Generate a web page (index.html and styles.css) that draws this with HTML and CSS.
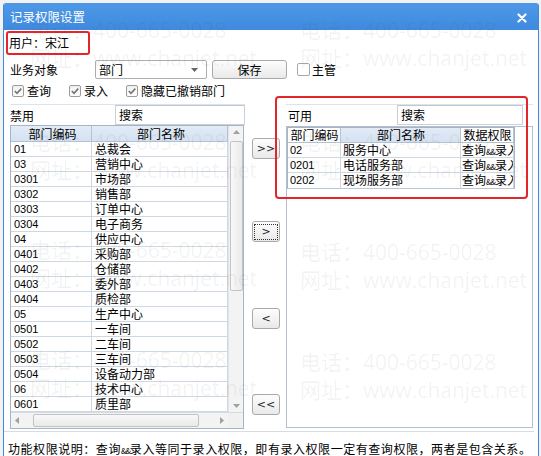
FILE: index.html
```html
<!DOCTYPE html>
<html>
<head>
<meta charset="utf-8">
<link rel="stylesheet" href="styles.css">
</head>
<body>
<div class="page">
  <div class="window">
    <div class="titlebar">
      <span class="title">记录权限设置</span>
      <svg class="close" width="10" height="10" viewBox="0 0 10 10"><path d="M1.5 1.5 L8.5 8.5 M8.5 1.5 L1.5 8.5" stroke="#fff" stroke-width="2.2" stroke-linecap="round"/></svg>
    </div>
    <div class="content">
      <div class="user-box">用户：宋江</div>
      <div class="obj-row">
        <span class="obj-label">业务对象</span>
        <div class="select"><span>部门</span><svg width="7" height="4" viewBox="0 0 7 4"><path d="M0 0 H7 L3.5 4 Z" fill="#666"/></svg></div>
        <div class="btn save">保存</div>
        <label class="chk unchecked"><span class="box"></span>主管</label>
      </div>
      <div class="chk-row">
        <label class="chk"><span class="box"><svg width="10" height="10" viewBox="0 0 10 10"><path d="M1.8 5 L4 7.3 L8.3 2.6" fill="none" stroke="#767676" stroke-width="1.6"/></svg></span>查询</label>
        <label class="chk c2"><span class="box"><svg width="10" height="10" viewBox="0 0 10 10"><path d="M1.8 5 L4 7.3 L8.3 2.6" fill="none" stroke="#767676" stroke-width="1.6"/></svg></span>录入</label>
        <label class="chk c3"><span class="box"><svg width="10" height="10" viewBox="0 0 10 10"><path d="M1.8 5 L4 7.3 L8.3 2.6" fill="none" stroke="#767676" stroke-width="1.6"/></svg></span>隐藏已撤销部门</label>
      </div>
      <div class="lists">
        <div class="left">
          <div class="panel-head">
            <span class="plabel">禁用</span>
            <div class="search">搜索</div>
          </div>
          <div class="tbl">
            <div class="tbl-top">
              <div class="cols">
                <div class="row head"><div class="c1">部门编码</div><div class="c2">部门名称</div></div>
                <div class="row"><div class="c1">01</div><div class="c2">总裁会</div></div>
                <div class="row"><div class="c1">03</div><div class="c2">营销中心</div></div>
                <div class="row"><div class="c1">0301</div><div class="c2">市场部</div></div>
                <div class="row"><div class="c1">0302</div><div class="c2">销售部</div></div>
                <div class="row"><div class="c1">0303</div><div class="c2">订单中心</div></div>
                <div class="row"><div class="c1">0304</div><div class="c2">电子商务</div></div>
                <div class="row"><div class="c1">04</div><div class="c2">供应中心</div></div>
                <div class="row"><div class="c1">0401</div><div class="c2">采购部</div></div>
                <div class="row"><div class="c1">0402</div><div class="c2">仓储部</div></div>
                <div class="row"><div class="c1">0403</div><div class="c2">委外部</div></div>
                <div class="row"><div class="c1">0404</div><div class="c2">质检部</div></div>
                <div class="row"><div class="c1">05</div><div class="c2">生产中心</div></div>
                <div class="row"><div class="c1">0501</div><div class="c2">一车间</div></div>
                <div class="row"><div class="c1">0502</div><div class="c2">二车间</div></div>
                <div class="row"><div class="c1">0503</div><div class="c2">三车间</div></div>
                <div class="row"><div class="c1">0504</div><div class="c2">设备动力部</div></div>
                <div class="row"><div class="c1">06</div><div class="c2">技术中心</div></div>
                <div class="row"><div class="c1">0601</div><div class="c2">质里部</div></div>
              </div>
              <div class="vscroll">
                <svg class="arr" width="7" height="4" viewBox="0 0 7 4"><path d="M0 4 H7 L3.5 0 Z" fill="#a0a0a0"/></svg>
                <div class="vthumb"></div>
                <div class="vfill"></div>
                <svg class="arr" width="7" height="4" viewBox="0 0 7 4"><path d="M0 0 H7 L3.5 4 Z" fill="#a0a0a0"/></svg>
              </div>
            </div>
            <div class="tbl-bottom">
              <div class="hscroll">
                <svg width="4" height="7" viewBox="0 0 4 7"><path d="M4 0 V7 L0 3.5 Z" fill="#a0a0a0"/></svg>
                <div class="hthumb"></div>
                <svg width="4" height="7" viewBox="0 0 4 7"><path d="M0 0 V7 L4 3.5 Z" fill="#a0a0a0"/></svg>
              </div>
              <div class="corner"></div>
            </div>
          </div>
        </div>
        <div class="mid">
          <div class="btn move b1">&gt;&gt;</div>
          <div class="btn move b2 focus"><span>&gt;</span></div>
          <div class="btn move b3">&lt;</div>
          <div class="btn move b4">&lt;&lt;</div>
        </div>
        <div class="right">
          <div class="panel-head">
            <span class="plabel rl">可用</span>
            <div class="search rs">搜索</div>
          </div>
          <div class="rbox">
            <div class="rtbl">
              <div class="row head"><div class="r1">部门编码</div><div class="r2 blue">部门名称</div><div class="r3">数据权限</div></div>
              <div class="row"><div class="r1">02</div><div class="r2">服务中心</div><div class="r3">查询<span class="amp">&amp;&amp;</span>录入</div></div>
              <div class="row"><div class="r1">0201</div><div class="r2">电话服务部</div><div class="r3">查询<span class="amp">&amp;&amp;</span>录入</div></div>
              <div class="row"><div class="r1">0202</div><div class="r2">现场服务部</div><div class="r3">查询<span class="amp">&amp;&amp;</span>录入</div></div>
            </div>
          </div>
        </div>
      </div>
      <div class="sep"></div>
      <div class="note">功能权限说明：查询<span class="amp">&amp;&amp;</span>录入等同于录入权限，即有录入权限一定有查询权限，两者是包含关系。</div>
    </div>
  </div>
  <div class="redbox"></div>
  <div class="wm w1"><div>电话：400-665-0028</div><div>网址：www.chanjet.net</div></div>
  <div class="wm w2"><div>电话：400-665-0028</div><div>网址：www.chanjet.net</div></div>
  <div class="wm w3"><div>电话：400-665-0028</div><div>网址：www.chanjet.net</div></div>
  <div class="wm w4"><div>电话：400-665-0028</div><div>网址：www.chanjet.net</div></div>
  <div class="wm w5"><div>电话：400-665-0028</div><div>网址：www.chanjet.net</div></div>
  <div class="wm w6"><div>电话：400-665-0028</div><div>网址：www.chanjet.net</div></div>
  <div class="wm w7"><div>电话：400-665-0028</div><div>网址：www.chanjet.net</div></div>
  <div class="wm w8"><div>电话：400-665-0028</div><div>网址：www.chanjet.net</div></div>
</div>
</body>
</html>
```
FILE: styles.css
```css
* { box-sizing: border-box; }
html, body { margin: 0; padding: 0; background: #fff; }
body {
  font-family: "Liberation Sans", "Noto Sans CJK SC", sans-serif;
  font-size: 12px;
  color: #000;
}
.page { position: relative; width: 541px; height: 456px; overflow: hidden; background: #f2f2f2; }
.window {
  margin: 3px 0 0 3px;
  width: 536px;
  height: 453px;
  background: #fff;
  border-left: 1px solid #3f88da;
  border-right: 1px solid #3f88da;
  border-radius: 3px 3px 0 0;
  overflow: hidden;
}
.titlebar {
  height: 27px;
  background: linear-gradient(#4d98e6, #3f8ade);
  display: flex;
  align-items: center;
  justify-content: space-between;
  padding: 0 11px 0 6px;
  color: #fff;
}
.title { font-family: "Noto Sans CJK SC", sans-serif; font-size: 12.5px; line-height: 16px; }
.close { display: block; margin-top: 2px; }
.content { position: relative; }
.user-box {
  margin: 1px 0 0 2px;
  width: 84px;
  height: 24px;
  border: 2px solid #e3262a;
  border-radius: 3px;
  padding-left: 1px;
  font-family: "Noto Sans CJK SC", sans-serif;
  font-size: 12px;
  line-height: 20px;
}
.obj-row { margin-top: 5px; height: 19px; display: flex; align-items: center; }
.obj-label { margin-left: 6px; width: 85px; font-family: "Noto Sans CJK SC", sans-serif; font-size: 12px; line-height: 16px; }
.select {
  width: 112px; height: 19px;
  border: 1px solid #abadb3;
  border-radius: 2px;
  display: flex; align-items: center; justify-content: space-between;
  padding: 0 8px 0 3px;
  font-family: "Noto Sans CJK SC", sans-serif; font-size: 12px; line-height: 16px;
  background: #fff;
}
.btn {
  border: 1px solid #a9a9a9;
  border-radius: 3px;
  background: linear-gradient(#fdfdfd, #e9e9e9);
  display: flex; align-items: center; justify-content: center;
  font-family: "Noto Sans CJK SC", sans-serif; font-size: 12px; line-height: 16px;
}
.save { margin-left: 5px; width: 75px; height: 19px; }
.chk { display: flex; align-items: center; font-family: "Noto Sans CJK SC", sans-serif; font-size: 12px; line-height: 16px; }
.chk .box {
  width: 12px; height: 12px;
  border: 1px solid #9c9c9c;
  border-radius: 2px;
  background: linear-gradient(#f0f0f0, #fdfdfd);
  margin-right: 3px;
  display: flex; align-items: center; justify-content: center;
}
.unchecked { margin-left: 10px; }
.unchecked .box { width: 13px; height: 13px; background: #fff; border-color: #a8a8a8; margin-right: 2px; }
.chk-row { margin-top: 4px; height: 15px; display: flex; align-items: center; padding-left: 8px; }
.chk-row .c2 { margin-left: 18px; }
.chk-row .c3 { margin-left: 18px; }
.lists { margin-top: 6px; height: 324px; display: flex; }
.left { margin-left: 6px; width: 235px; }
.panel-head { height: 21px; display: flex; align-items: flex-start; border-top: 1px solid #dde3ea; }
.plabel { width: 105px; padding-top: 3px; font-family: "Noto Sans CJK SC", sans-serif; font-size: 12px; line-height: 16px; }
.search {
  width: 130px; height: 20px;
  border: 1px solid #c9d0d7;
  border-top-color: #bfc6ce;
  padding: 1px 0 0 3px;
  font-family: "Noto Sans CJK SC", sans-serif; font-size: 12px; line-height: 16px;
  background: #fff;
}
.tbl { width: 234px; height: 304px; border: 1px solid #a5b5c6; display: flex; flex-direction: column; }
.tbl-top { display: flex; height: 286px; }
.cols { width: 217px; }
.row { display: flex; height: 15px; border-bottom: 1px solid #cdd8e3; font-size: 11px; line-height: 14px; }
.row > div { border-right: 1px solid #cdd8e3; padding-left: 3px; white-space: nowrap; }
.row .c1 { width: 81px; }
.row .c2 { width: 136px; font-family: "Noto Sans CJK SC", sans-serif; font-size: 12px; line-height: 14px; }
.row.head { height: 16px; background: linear-gradient(#e2ebf6, #d5e2f2); border-bottom-color: #b4c3d3; }
.row.head > div { text-align: center; font-family: "Noto Sans CJK SC", sans-serif; font-size: 12px; line-height: 15px; border-right-color: #b4c3d3; }
.vscroll {
  width: 15px;
  background: #f3f3f3;
  border-left: 1px solid #e4e4e4;
  display: flex; flex-direction: column; align-items: center;
  padding: 4px 0 4px;
}
.vscroll .arr { display: block; flex: none; }
.vthumb { margin-top: 7px; width: 13px; height: 150px; border: 1px solid #c3c3c3; border-radius: 2px; background: linear-gradient(90deg, #f9f9f9, #e9e9e9); }
.vfill { flex: 1; }
.tbl-bottom { display: flex; height: 16px; border-top: 1px solid #d4dbe3; }
.hscroll {
  width: 217px;
  background: #f3f3f3;
  display: flex; align-items: center;
  padding: 0 4px;
}
.hthumb { margin: 0 21px 0 14px; flex: 1; height: 13px; border: 1px solid #c3c3c3; border-radius: 2px; background: linear-gradient(#f9f9f9, #e9e9e9); }
.corner { flex: 1; background: #f0f0f0; }
.mid { margin-left: 7px; width: 28px; display: flex; flex-direction: column; }
.move { width: 28px; height: 21px; font-family: "DejaVu Sans", sans-serif; font-size: 11px; line-height: 12px; color: #222; }
.b1 { margin-top: 34px; }
.b2 { margin-top: 62px; }
.b2 span { border: 1px dotted #333; padding: 1px 6px; }
.b3 { margin-top: 66px; }
.b4 { margin-top: 65px; }
.right { margin-left: 6px; width: 247px; }
.rl { width: 111px; padding-left: 2px; }
.rs { width: 126px; }
.rbox { margin-top: 1px; height: 302px; border: 1px solid #b3bfcc; background: #fff; }
.rtbl { width: 228px; border: 1px solid #a5b5c6; border-bottom-color: #b9c6d4; }
.rtbl .row { border-bottom: 1px solid #cdd8e3; }
.rtbl .row:last-child { border-bottom: none; }
.rtbl .row > div { font-family: "Noto Sans CJK SC", sans-serif; font-size: 12px; line-height: 14px; padding-left: 2px; }
.rtbl .row .r1 { width: 53px; font-family: "Liberation Sans", sans-serif; font-size: 11px; }
.rtbl .row .r2 { width: 120px; }
.rtbl .row .r3 { width: 53px; padding-left: 1px; overflow-x: clip; }
.rtbl .row.head { background: #fff; height: 15px; border-bottom-color: #b4c3d3; }
.rtbl .row.head > div { font-size: 12px; font-family: "Noto Sans CJK SC", sans-serif; padding-left: 1px; }
.rtbl .row.head .blue { background: linear-gradient(#e2ebf6, #d5e2f2); }
.amp { font-size: 8px; letter-spacing: -1px; }
.sep { margin: 3px 4px 0 0; border-top: 1px solid #d6dce3; }
.note { margin: 9px 0 0 4px; font-family: "Noto Sans CJK SC", sans-serif; font-size: 12px; letter-spacing: 0.55px; line-height: 16px; white-space: nowrap; }
.redbox {
  position: absolute; left: 275px; top: 96px; width: 253px; height: 103px;
  border: 2px solid #e3262a; border-radius: 4px;
  pointer-events: none;
}
.wm {
  position: absolute;
  font-family: "Open Sans", "Noto Sans CJK SC", sans-serif;
  font-size: 21px;
  line-height: 28px;
  color: rgba(60, 60, 60, 0.065);
  white-space: nowrap;
  pointer-events: none;
}
.w1 { left: 30px; top: 16px; }
.w2 { left: 300px; top: 16px; }
.w3 { left: 30px; top: 128px; }
.w4 { left: 300px; top: 128px; }
.w5 { left: 30px; top: 236px; }
.w6 { left: 300px; top: 238px; }
.w7 { left: 30px; top: 346px; }
.w8 { left: 300px; top: 348px; }
```
